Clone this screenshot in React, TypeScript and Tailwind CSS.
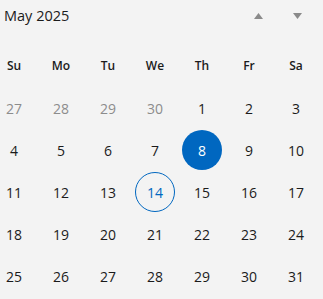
import React from "react";

type Day = { n: number; muted?: boolean };

const dayNames = ["Su", "Mo", "Tu", "We", "Th", "Fr", "Sa"];

function buildDays(): Day[] {
  const days: Day[] = [27, 28, 29, 30].map((n) => ({ n, muted: true }));
  for (let i = 1; i <= 31; i++) days.push({ n: i });
  return days;
}

function Triangle({ up }: { up?: boolean }) {
  return (
    <svg width="9" height="6" viewBox="0 0 9 6" className="fill-[#8a8a8a]">
      {up ? <path d="M4.5 0 L9 6 L0 6 Z" /> : <path d="M0 0 L9 0 L4.5 6 Z" />}
    </svg>
  );
}

export default function App() {
  const days = buildDays();
  const selected = 8;
  const today = 14;

  return (
    <div
      className="w-[323px] h-[299px] overflow-hidden bg-[#f3f3f3] text-[#1b1b1b]"
      style={{ fontFamily: '"Open Sans", "Noto Sans", sans-serif' }}
    >
      <div className="flex items-center h-[32px] pl-[4px] pr-[6px]">
        <span className="text-[14.5px]">May 2025</span>
        <div className="ml-auto flex">
          <button className="w-[39px] h-[32px] flex items-center justify-center">
            <Triangle up />
          </button>
          <button className="w-[39px] h-[32px] flex items-center justify-center">
            <Triangle />
          </button>
        </div>
      </div>

      <div className="mt-[13px] -ml-[9.5px] grid grid-cols-[repeat(7,47px)] auto-rows-[42px]">
        {dayNames.map((d) => (
          <div key={d} className="flex items-center justify-center text-[12px] font-semibold">
            {d}
          </div>
        ))}
        {days.map((d, i) => {
          const isSel = !d.muted && d.n === selected;
          const isToday = !d.muted && d.n === today;
          return (
            <div key={i} className="flex items-center justify-center">
              <div
                className={`w-[40px] h-[40px] rounded-full flex items-center justify-center text-[14px] ${
                  isSel
                    ? "bg-[#0067c0] text-white"
                    : isToday
                    ? "border border-[#0067c0] text-[#0067c0]"
                    : d.muted
                    ? "text-[#8c8c8c]"
                    : ""
                }`}
              >
                {d.n}
              </div>
            </div>
          );
        })}
      </div>
    </div>
  );
}
